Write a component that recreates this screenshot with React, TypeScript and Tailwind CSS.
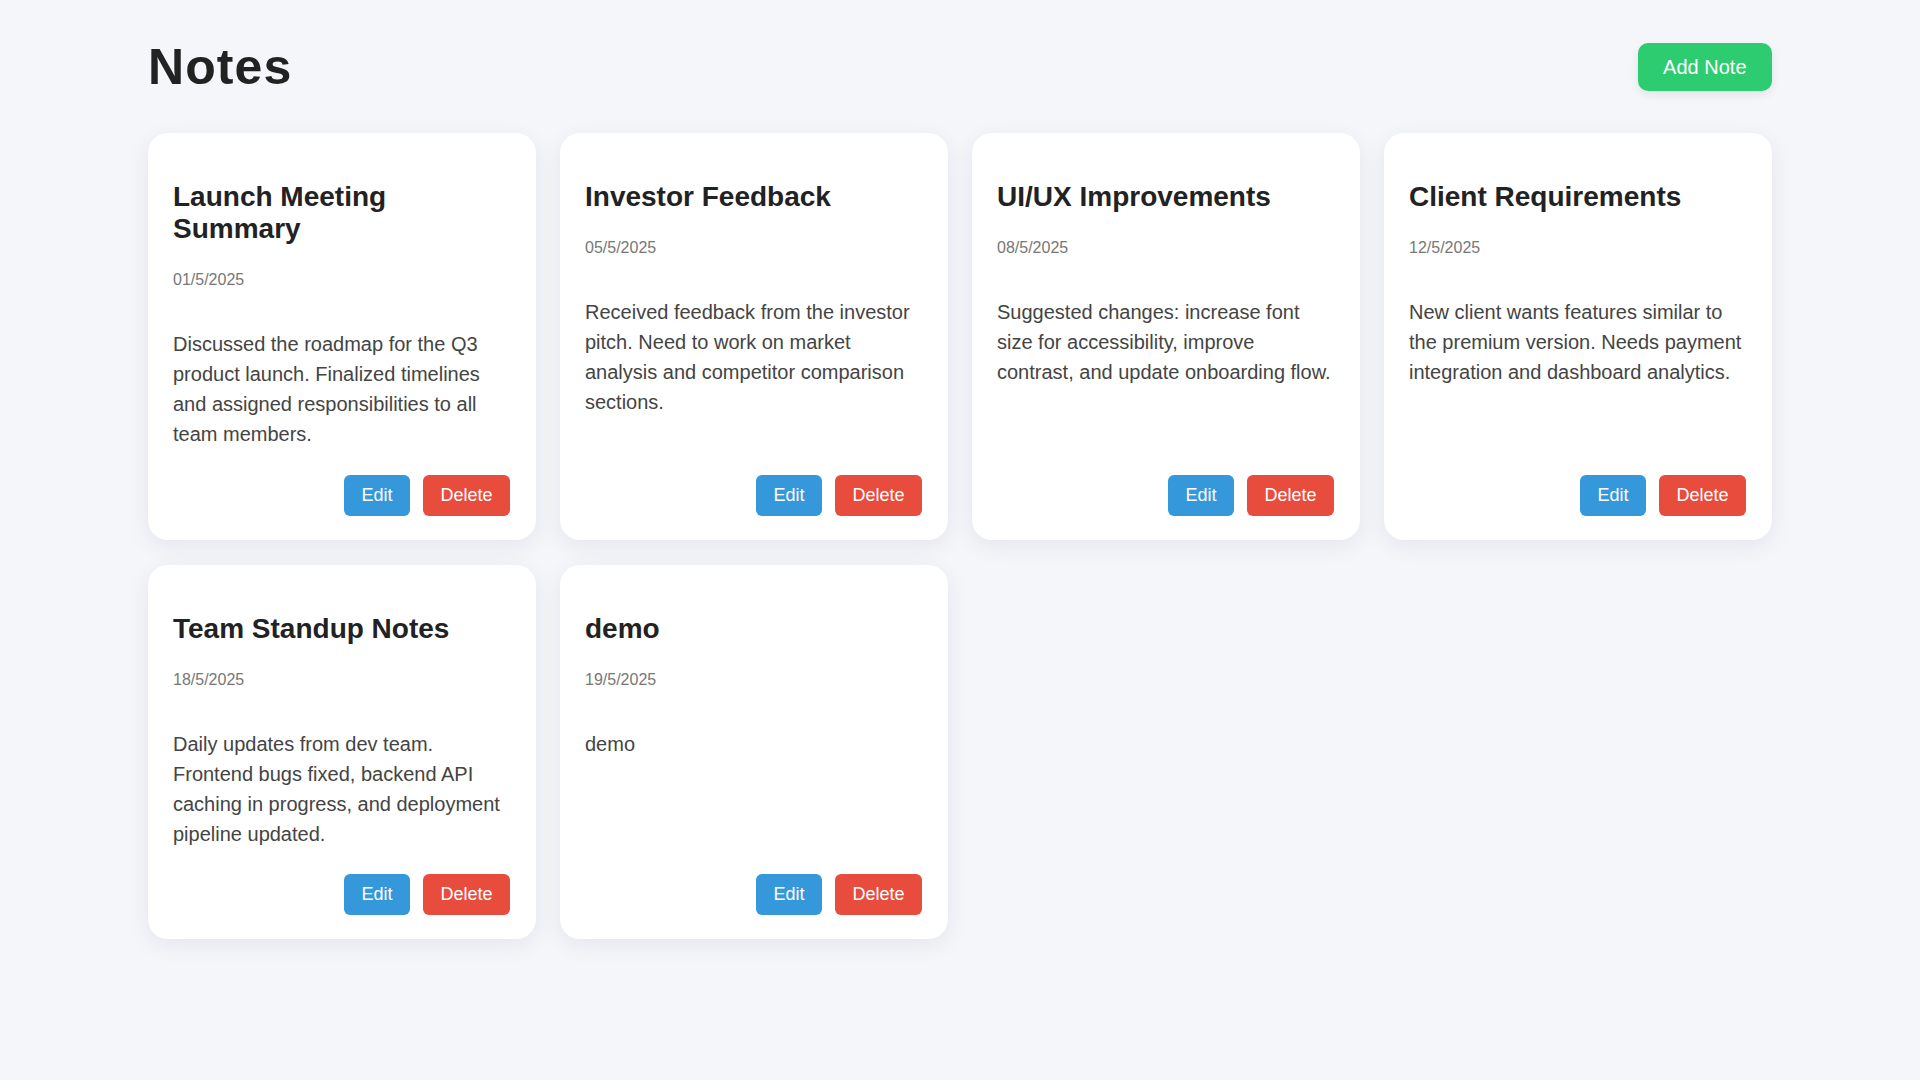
const notes = [
  {
    title: "Launch Meeting Summary",
    date: "01/5/2025",
    body: "Discussed the roadmap for the Q3 product launch. Finalized timelines and assigned responsibilities to all team members.",
  },
  {
    title: "Investor Feedback",
    date: "05/5/2025",
    body: "Received feedback from the investor pitch. Need to work on market analysis and competitor comparison sections.",
  },
  {
    title: "UI/UX Improvements",
    date: "08/5/2025",
    body: "Suggested changes: increase font size for accessibility, improve contrast, and update onboarding flow.",
  },
  {
    title: "Client Requirements",
    date: "12/5/2025",
    body: "New client wants features similar to the premium version. Needs payment integration and dashboard analytics.",
  },
  {
    title: "Team Standup Notes",
    date: "18/5/2025",
    body: "Daily updates from dev team. Frontend bugs fixed, backend API caching in progress, and deployment pipeline updated.",
  },
  { title: "demo", date: "19/5/2025", body: "demo" },
];

export default function App() {
  return (
    <main
      className="min-h-screen bg-[#f5f6fa] pt-[38px] pb-10"
      style={{ fontFamily: '"Liberation Sans", Arial, sans-serif' }}
    >
      <div className="w-[1624px] mx-auto">
        <header className="flex items-center justify-between mb-[37px]">
          <h1 className="text-[50px] leading-[58px] font-bold text-[#222] tracking-[1.1px]">Notes</h1>
          <button className="bg-[#2ecc71] text-white text-[20px] leading-[24px] px-[25.5px] py-3 rounded-[10px] shadow-[0_4px_10px_rgba(0,0,0,0.08)]">
            Add Note
          </button>
        </header>

        <div className="grid grid-cols-4 gap-x-6 gap-y-[25px]">
          {notes.map((note) => (
            <div
              key={note.title}
              className="bg-white rounded-[20px] pl-[25px] pr-[26px] py-6 flex flex-col shadow-[0_6px_24px_rgba(20,30,60,0.07)]"
            >
              <h2 className="mt-6 text-[28px] leading-[32px] font-bold text-[#222]">{note.title}</h2>
              <p className="mt-[26px] text-[16px] leading-[18px] text-[#777]">{note.date}</p>
              <p className="mt-10 text-[20px] leading-[30px] text-[#444]">{note.body}</p>
              <div className="mt-auto pt-[25.5px] flex justify-end gap-[13px]">
                <button className="bg-[#3498db] text-white text-[18px] leading-[21px] px-[17.5px] py-[10px] rounded-[6px]">
                  Edit
                </button>
                <button className="bg-[#e74c3c] text-white text-[18px] leading-[21px] px-[17.5px] py-[10px] rounded-[6px]">
                  Delete
                </button>
              </div>
            </div>
          ))}
        </div>
      </div>
    </main>
  );
}
